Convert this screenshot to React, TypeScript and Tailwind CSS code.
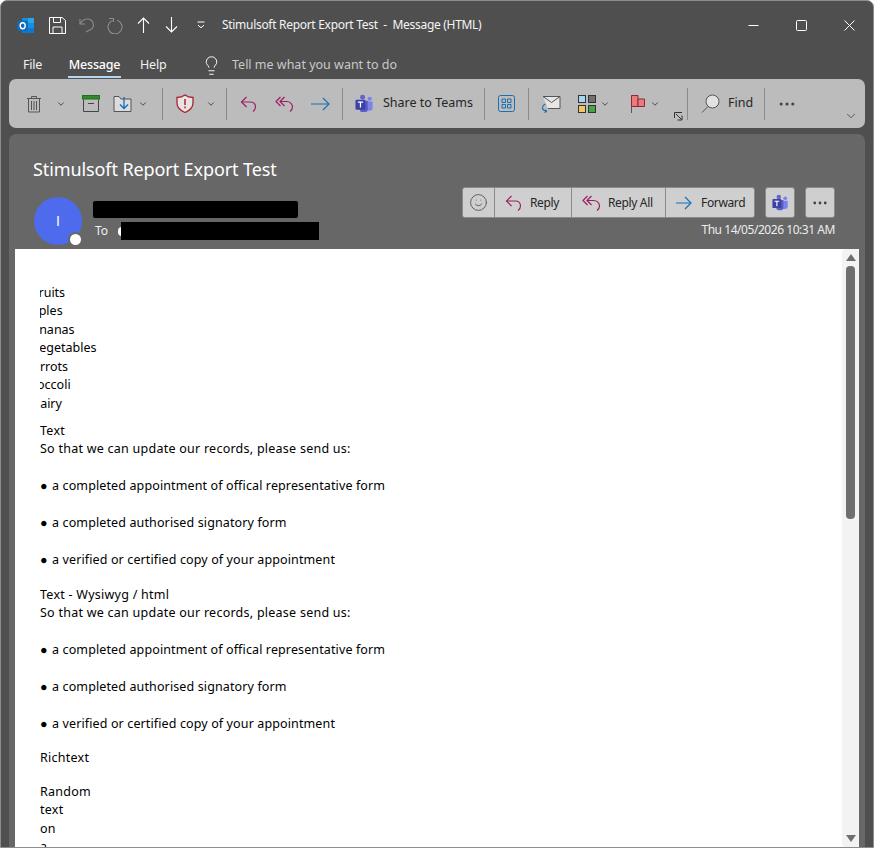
import type { ReactNode } from "react"
import { ChevronDown, Lightbulb, MoreHorizontal, Smile } from "lucide-react"

const FONT = "font-['Noto_Sans','Open_Sans',sans-serif]"

function ReplyIcon({ color = "#9b1f63" }: { color?: string }) {
  return (
    <svg width="18" height="18" viewBox="0 0 18 18" fill="none" stroke={color} strokeWidth="1.2">
      <path d="M6.500 2 1.500 7l5 5" />
      <path d="M1.500 7H10c3.500 0 5.500 2.200 5.500 5 0 2-1 3.500-2.500 4.500" />
    </svg>
  )
}

function ReplyAllIcon() {
  return (
    <svg width="20" height="18" viewBox="0 0 20 18" fill="none" stroke="#9b1f63" strokeWidth="1.2">
      <path d="M5.500 2 1 6.500 5.500 11" />
      <path d="M9.500 2 5 6.500 9.500 11" />
      <path d="M5 6.500h6.500c3.500 0 6 2.500 6 5.500 0 2-1 3.500-2.500 4.500" />
    </svg>
  )
}

function ForwardIcon({ width = 19 }: { width?: number }) {
  return (
    <svg width={width} height="14" viewBox={`0 0 ${width} 14`} fill="none" stroke="#1a6fb0" strokeWidth="1.2">
      <path d={`M0 7h${width - 1}`} />
      <path d={`M${width - 7} 1l6 6-6 6`} />
    </svg>
  )
}

function TeamsIcon({ size = 20 }: { size?: number }) {
  return (
    <svg width={size} height={size} viewBox="0 0 20 20">
      <circle cx="8" cy="3.500" r="2.600" fill="#6264c9" />
      <circle cx="15.500" cy="5" r="2.200" fill="#7b83eb" />
      <path d="M11 8h7.500v6.500a3 3 0 0 1-3 3H13a2 2 0 0 1-2-2z" fill="#7b83eb" />
      <path d="M5 7h8.500v9.500a2.500 2.500 0 0 1-2.500 2.500H8a3 3 0 0 1-3-3z" fill="#5a5fc7" />
      <rect x="0.500" y="6" width="10.500" height="10.500" rx="1" fill="#3f3fa8" />
      <path d="M3 8.500h5.500M5.750 8.500v5.800" stroke="#fff" strokeWidth="1.300" fill="none" />
    </svg>
  )
}

function Slot({ w, children }: { w: string; children: ReactNode }) {
  return <div className={`flex h-full shrink-0 items-center justify-center ${w}`}>{children}</div>
}

function Chev() {
  return <ChevronDown size={10} strokeWidth={2} className="text-[#333]" />
}

function Sep() {
  return <div className="h-[32px] w-px shrink-0 bg-[#8a8a8a]" />
}

function TitleBar() {
  return (
    <div className="flex h-[48px] shrink-0 items-center text-white">
      <Slot w="w-[48px]">
        <svg width="17" height="17" viewBox="0 0 17 17">
          <rect x="5" y="1" width="12" height="15" rx="1" fill="#1490df" />
          <rect x="11" y="1" width="6" height="5" fill="#28a8ea" />
          <rect x="5" y="11" width="12" height="5" fill="#0f78d4" />
          <rect x="0.500" y="3.500" width="10.500" height="10.500" rx="1" fill="#0f6cbd" />
          <ellipse cx="5.700" cy="8.700" rx="2.500" ry="3" fill="none" stroke="#fff" strokeWidth="1.400" />
        </svg>
      </Slot>
      <Slot w="w-[17px]">
        <svg width="17" height="17" viewBox="0 0 17 17" fill="none" stroke="#fff" strokeWidth="1">
          <path d="M.5.500h12.500L16.500 3.500v13H.500z" />
          <path d="M4.500 .5v5h7v-5M4 16.500v-6.500h9v6.500" />
        </svg>
      </Slot>
      <div className="w-[8px] shrink-0" />
      <Slot w="w-[24px]">
        <svg width="15" height="16" viewBox="0 0 15 16" fill="none" stroke="#8c8c8c" strokeWidth="1.100">
          <path d="M1 2v5h5" />
          <path d="M1 7c2-3.500 4-5 7-5a5.800 5.800 0 0 1 1.500 11.500L7 15" />
        </svg>
      </Slot>
      <div className="w-[4px] shrink-0" />
      <Slot w="w-[26px]">
        <svg width="17" height="17" viewBox="0 0 17 17" fill="none" stroke="#8c8c8c" strokeWidth="1.100">
          <path d="M10 3.200a7 7 0 1 1-4.500.2" />
          <path d="M2 1.500h4.500V5" />
        </svg>
      </Slot>
      <div className="w-[1px] shrink-0" />
      <Slot w="w-[28px]">
        <svg width="13" height="16" viewBox="0 0 13 16" fill="none" stroke="#fff" strokeWidth="1.100">
          <path d="M6.500 16V1M1 6.500 6.500 1 12 6.500" />
        </svg>
      </Slot>
      <Slot w="w-[29px]">
        <svg width="13" height="16" viewBox="0 0 13 16" fill="none" stroke="#fff" strokeWidth="1.100">
          <path d="M6.500 0v15M1 9.500 6.500 15 12 9.500" />
        </svg>
      </Slot>
      <Slot w="w-[29px]">
        <svg width="10" height="8" viewBox="0 0 10 8" fill="none" stroke="#fff" strokeWidth="1">
          <path d="M1.500 1h7M2 4.200l3 2.500 3-2.500" />
        </svg>
      </Slot>
      <div className="w-[7px] shrink-0" />
      <span className="whitespace-pre text-[12px] tracking-[-0.3px] text-[#f4f4f4]">Stimulsoft Report Export Test  -  Message (HTML)</span>
      <div className="flex-1" />
      <Slot w="w-[48px]">
        <svg width="11" height="11" viewBox="0 0 11 11" fill="none" stroke="#fff"><path d="M.5 5.500h10" /></svg>
      </Slot>
      <Slot w="w-[48px]">
        <svg width="11" height="11" viewBox="0 0 11 11" fill="none" stroke="#fff"><rect x="0.500" y="0.500" width="10" height="10" rx="1" /></svg>
      </Slot>
      <Slot w="w-[48px]">
        <svg width="11" height="11" viewBox="0 0 11 11" fill="none" stroke="#fff"><path d="M.5.500l10 10M10.500.500l-10 10" /></svg>
      </Slot>
    </div>
  )
}

function Tabs() {
  return (
    <div className="flex h-[30px] shrink-0 items-start pl-[22px] text-[12.5px] tracking-[-0.2px] text-[#f2f2f2]">
      <span className="w-[45px] pt-[7px]">File</span>
      <div className="flex w-[72px] flex-col">
        <span className="w-[53px] border-b-2 border-[#b3d7f2] pt-[7px] pb-[1px] text-center font-medium whitespace-nowrap text-white">Message</span>
      </div>
      <span className="w-[61px] pt-[7px]">Help</span>
      <Lightbulb size={21} strokeWidth={1.100} className="mt-[6px] text-white" />
      <span className="ml-[10px] pt-[7px] tracking-[0px] whitespace-nowrap text-[#c9c9c9]">Tell me what you want to do</span>
    </div>
  )
}

function Ribbon() {
  return (
    <div className="mx-[8px] flex h-[49px] shrink-0 items-center rounded-[7px] bg-[#bcbcbc] pl-[13px] text-[12.5px] text-[#262626]">
      <Slot w="w-[24px]">
        <svg width="16" height="18" viewBox="0 0 16 18" fill="none" stroke="#555" strokeWidth="1">
          <path d="M1 3.500h14M5.500 3.500V1.500h5v2M2.500 3.500V17h11V3.500M5.500 6v9M8 6v9M10.500 6v9" />
        </svg>
      </Slot>
      <div className="w-[8px] shrink-0" />
      <Slot w="w-[14px]"><Chev /></Slot>
      <div className="w-[8px] shrink-0" />
      <Slot w="w-[30px]">
        <svg width="18" height="17" viewBox="0 0 18 17" fill="none">
          <rect x="0.500" y="0.500" width="17" height="3.500" fill="#2e8b2e" stroke="#1f6f1f" />
          <path d="M1.500 4.500v12h15v-12M6 8.500h6" stroke="#444" />
        </svg>
      </Slot>
      <Slot w="w-[32px]">
        <svg width="19" height="18" viewBox="0 0 19 18" fill="none">
          <path d="M1 16.500V1.500h5l2 2.500h10v12.500z" fill="#dcdcdc" stroke="#555" />
          <path d="M11 2v11M7 9.500l4 4 4-4" stroke="#0f6cbd" strokeWidth="1.300" />
        </svg>
      </Slot>
      <Slot w="w-[10px]"><Chev /></Slot>
      <div className="w-[14px] shrink-0" />
      <Sep />
      <div className="w-[9px] shrink-0" />
      <Slot w="w-[26px]">
        <svg width="18" height="19" viewBox="0 0 18 19" fill="none">
          <path d="M9 1c2 1.500 4.500 2.500 8 2.500V9c0 4.500-3.500 7.500-8 9.500C4.500 16.500 1 13.500 1 9V3.500c3.500 0 6-1 8-2.500z" fill="#e9e3e3" stroke="#a4262c" strokeWidth="1.300" />
          <path d="M9 5v6M9 12.500v1.800" stroke="#a4262c" strokeWidth="1.500" />
        </svg>
      </Slot>
      <div className="w-[6px] shrink-0" />
      <Slot w="w-[14px]"><Chev /></Slot>
      <div className="w-[8px] shrink-0" />
      <Sep />
      <div className="w-[10px] shrink-0" />
      <Slot w="w-[24px]"><ReplyIcon /></Slot>
      <div className="w-[12px] shrink-0" />
      <Slot w="w-[24px]"><ReplyAllIcon /></Slot>
      <div className="w-[10px] shrink-0" />
      <Slot w="w-[26px]"><ForwardIcon /></Slot>
      <div className="w-[9px] shrink-0" />
      <Sep />
      <div className="w-[12px] shrink-0" />
      <TeamsIcon size={19} />
      <span className="ml-[9px] w-[91px] shrink-0 whitespace-nowrap">Share to Teams</span>
      <div className="w-[10px] shrink-0" />
      <Sep />
      <div className="w-[11px] shrink-0" />
      <Slot w="w-[20px]">
        <svg width="17" height="17" viewBox="0 0 17 17" fill="none" stroke="#1a6fb0" strokeWidth="1">
          <rect x="0.500" y="0.500" width="16" height="16" rx="2" />
          <path d="M4 4h3.500v3.500H4zM9.500 4H13v3.500H9.500zM4 9.500h3.500V13H4zM9.500 9.500H13V13H9.500z" />
        </svg>
      </Slot>
      <div className="w-[12px] shrink-0" />
      <Sep />
      <div className="w-[12px] shrink-0" />
      <Slot w="w-[20px]">
        <svg width="20" height="18" viewBox="0 0 20 18" fill="none">
          <path d="M2 1.500h17v12H7" fill="#e6e6e6" stroke="#555" />
          <path d="M2 1.500l8.500 6 8.500-6" stroke="#555" />
          <path d="M4.500 9C1.500 10 .5 13 2.500 15l3 1.500M3.500 17.500l2-1-1-2" stroke="#1a6fb0" strokeWidth="1.100" />
        </svg>
      </Slot>
      <div className="w-[14px] shrink-0" />
      <Slot w="w-[24px]">
        <svg width="18" height="18" viewBox="0 0 18 18">
          <rect x="0.500" y="0.500" width="7" height="7" fill="#a9d3f0" stroke="#333" />
          <rect x="10.500" y="0.500" width="7" height="7" fill="#707070" stroke="#333" />
          <rect x="0.500" y="10.500" width="7" height="7" fill="#f2c661" stroke="#333" />
          <rect x="10.500" y="10.500" width="7" height="7" fill="#46a346" stroke="#333" />
        </svg>
      </Slot>
      <Slot w="w-[12px]"><Chev /></Slot>
      <div className="w-[18px] shrink-0" />
      <Slot w="w-[18px]">
        <svg width="14" height="18" viewBox="0 0 14 18" fill="none" stroke="#8a2a32">
          <path d="M.5 18V.5" stroke="#555" />
          <path d="M.5.500h6.500v11H.500z" fill="#ea7a80" />
          <path d="M7 4h6.500v7.500H7z" fill="#ea7a80" />
        </svg>
      </Slot>
      <Slot w="w-[16px]"><Chev /></Slot>
      <div className="w-[6px] shrink-0" />
      <div className="flex h-full w-[18px] shrink-0 items-end justify-center pb-[7px]">
        <svg width="9" height="9" viewBox="0 0 9 9" fill="none" stroke="#333">
          <path d="M.5 6V.5H8M2 2l5.500 5.500M3.500 8h4.500V3.500" />
        </svg>
      </div>
      <Sep />
      <div className="w-[12px] shrink-0" />
      <Slot w="w-[20px]">
        <svg width="19" height="19" viewBox="0 0 19 19" fill="none" stroke="#555" strokeWidth="1">
          <circle cx="11.500" cy="7.500" r="6.500" fill="#e2e2e2" />
          <path d="M7 12.500 1 18.500" />
        </svg>
      </Slot>
      <span className="ml-[8px] w-[24px] shrink-0">Find</span>
      <div className="w-[12px] shrink-0" />
      <Sep />
      <div className="w-[12px] shrink-0" />
      <Slot w="w-[20px]"><MoreHorizontal size={20} strokeWidth={1.700} className="text-[#444]" /></Slot>
      <div className="flex-1" />
      <div className="flex h-full w-[28px] shrink-0 items-end justify-center pb-[5px]">
        <ChevronDown size={14} strokeWidth={1.300} className="text-[#333]" />
      </div>
    </div>
  )
}

function ActionButton({ w, icon, label, gap }: { w: string; icon: ReactNode; label: string; gap: string }) {
  return (
    <div className={`flex h-full items-center border-l border-[#8a8a8a] pl-[10px] ${w}`}>
      {icon}
      <span className={`whitespace-nowrap ${gap}`}>{label}</span>
    </div>
  )
}

function MessageHeader() {
  return (
    <div className="h-[115px] shrink-0 pl-[25px] text-white">
      <div className="-ml-[1px] pt-[21px] text-[18px] leading-[28px] tracking-[-0.1px]">Stimulsoft Report Export Test</div>
      <div className="mt-[-13px] flex items-start">
        <div className="relative mt-[27px] flex h-[48px] w-[48px] shrink-0 items-center justify-center rounded-full bg-[#4f6bed] font-['Liberation_Sans',sans-serif] text-[14px]">
          I
          <div className="absolute top-[35px] left-[34px] h-[15px] w-[15px] rounded-full border-2 border-[#676767] bg-white" />
        </div>
        <div className="ml-[11px] flex w-[226px] flex-col pt-[31px]">
          <div className="h-[17px] w-[205px] rounded-[2px] bg-black" />
          <div className="mt-[4px] flex h-[18px] items-center pl-[2px] text-[12px]">
            <span className="w-[24px] text-[#f0f0f0]">To</span>
            <div className="-ml-[1px] h-[9px] w-[4px] rounded-l-full bg-white" />
            <div className="-ml-[1px] h-[18px] w-[198px] bg-black" />
          </div>
        </div>
        <div className="ml-[143px] flex w-[373px] flex-col items-start pt-[17px]">
          <div className="flex h-[31px] gap-[10px]">
            <div className="flex h-full w-[293px] rounded-[3px] border border-[#8a8a8a] bg-[#cfcfcf] text-[12px] tracking-[-0.35px] text-[#262626]">
              <div className="flex h-full w-[31px] items-center justify-center">
                <Smile size={19} strokeWidth={1} className="text-[#444]" />
              </div>
              <ActionButton w="w-[77px]" gap="ml-[7px]" label="Reply" icon={<ReplyIcon />} />
              <ActionButton w="w-[94px]" gap="ml-[6px]" label="Reply All" icon={<ReplyAllIcon />} />
              <ActionButton w="w-[89px]" gap="ml-[9px]" label="Forward" icon={<ForwardIcon width={16} />} />
            </div>
            <div className="flex h-full w-[30px] items-center justify-center rounded-[3px] border border-[#8a8a8a] bg-[#cfcfcf]">
              <TeamsIcon size={17} />
            </div>
            <div className="flex h-full w-[30px] items-center justify-center rounded-[3px] border border-[#8a8a8a] bg-[#cfcfcf]">
              <MoreHorizontal size={18} strokeWidth={1.700} className="text-[#444]" />
            </div>
          </div>
          <div className="mt-[3px] self-end text-[12px] leading-[18px] tracking-[-0.45px] text-[#ededed]">Thu 14/05/2026 10:31 AM</div>
        </div>
      </div>
    </div>
  )
}

function Bullet({ children }: { children: ReactNode }) {
  return (
    <p className="tracking-[0.12px]">
      <span className="mr-[1px]">●</span> {children}
    </p>
  )
}

function Bullets() {
  return (
    <>
      <p>So that we can update our records, please send us:</p>
      <p className="h-[18.5px]" />
      <Bullet>a completed appointment of offical representative form</Bullet>
      <p className="h-[18.5px]" />
      <Bullet>a completed authorised signatory form</Bullet>
      <p className="h-[18.5px]" />
      <Bullet>a verified or certified copy of your appointment</Bullet>
    </>
  )
}

function MessageBody() {
  return (
    <div className="mx-[6px] flex min-h-0 flex-1 bg-white">
      <div className="min-w-0 flex-1 overflow-hidden pt-[34.5px] pl-[25px] text-[12.5px] leading-[18.5px] tracking-[0.25px] text-black">
        <div className="w-[70px] overflow-hidden tracking-[0px] whitespace-nowrap">
          <p className="-ml-[8px]">Fruits</p>
          <p className="-ml-[17px]">Apples</p>
          <p className="-ml-[16px]">Bananas</p>
          <p className="-ml-[8px]">Vegetables</p>
          <p className="-ml-[15px]">Carrots</p>
          <p className="-ml-[16px]">Broccoli</p>
          <p className="-ml-[9px]">Dairy</p>
        </div>
        <p className="mt-[8.5px]">Text</p>
        <Bullets />
        <p className="mt-[16px]">Text - Wysiwyg / html</p>
        <Bullets />
        <p className="mt-[15px]">Richtext</p>
        <p className="mt-[15.5px]">Random</p>
        <p>text</p>
        <p>on</p>
        <p>a</p>
      </div>
      <div className="flex w-[17px] shrink-0 flex-col items-center rounded-[4px] bg-[#f3f3f3]">
        <div className="mt-[5px] h-0 w-0 border-x-[5px] border-b-[7px] border-x-transparent border-b-[#6f6f6f]" />
        <div className="mt-[5px] h-[253px] w-[9px] rounded-[4px] bg-[#6f6f6f]" />
        <div className="flex-1" />
        <div className="mb-[5px] h-0 w-0 border-x-[5px] border-t-[7px] border-x-transparent border-t-[#6f6f6f]" />
      </div>
    </div>
  )
}

export default function App() {
  return (
    <div className={`flex h-[848px] w-[874px] flex-col overflow-hidden rounded-t-[7px] border border-[#8d8d8d] bg-[#4f4f4f] ${FONT}`}>
      <TitleBar />
      <Tabs />
      <Ribbon />
      <div className="mx-[8px] mt-[6px] flex min-h-0 flex-1 flex-col rounded-t-[7px] bg-[#676767]">
        <MessageHeader />
        <MessageBody />
      </div>
    </div>
  )
}
